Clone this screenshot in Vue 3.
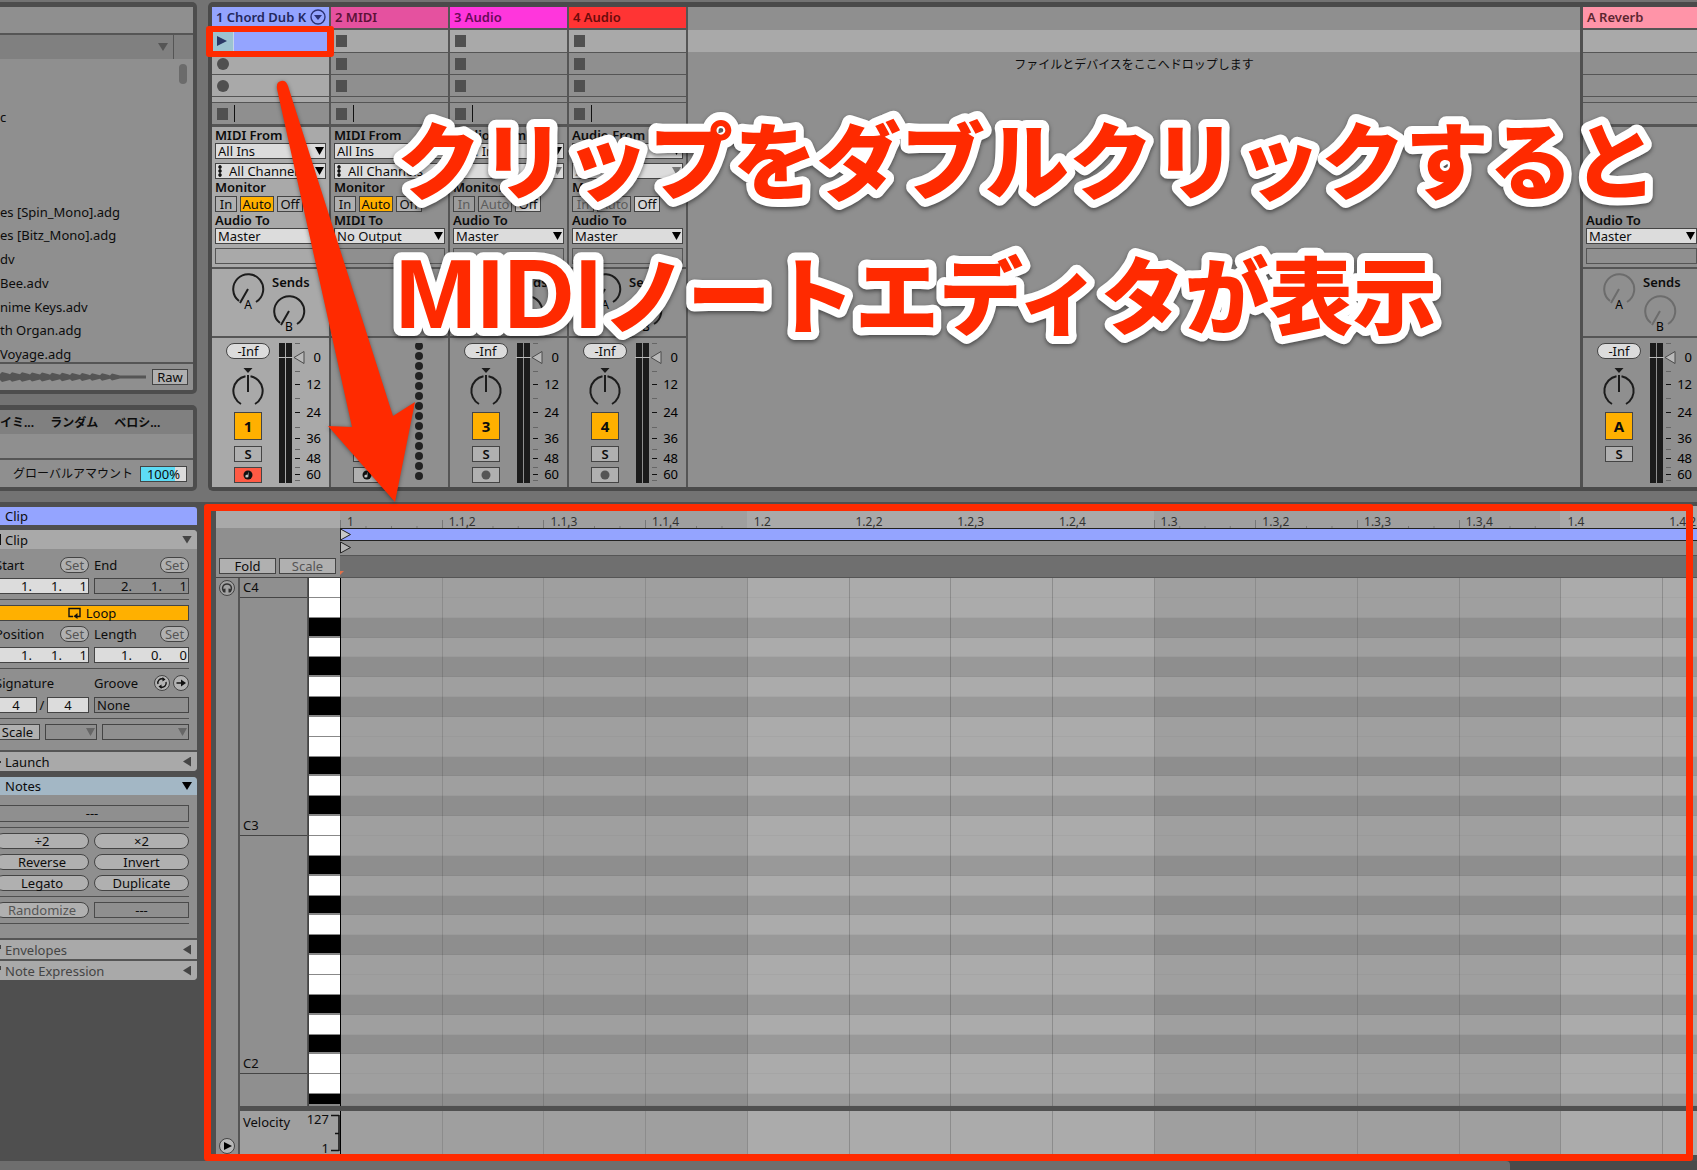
<template>
  <div class="live">
    <div class="upper">
      <div class="left-column">
        <section class="panel browser">
          <div class="browser-title"></div>
          <div class="browser-filter">
            <span class="tri-down tri-dim"></span>
          </div>
          <div class="browser-body">
            <ul class="file-list">
              <li v-for="(file, i) in files" :key="i">{{ file }}</li>
            </ul>
            <span class="scroll-thumb"></span>
          </div>
          <div class="preview">
            <svg class="wave" viewBox="0 0 148 16" aria-hidden="true">
              <path :d="wavePath" fill="#555" />
            </svg>
            <button class="btn raw">Raw</button>
          </div>
        </section>
        <section class="panel groove">
          <div class="groove-tabs">
            <span>イミ...</span>
            <span>ランダム</span>
            <span>ベロシ...</span>
          </div>
          <div class="groove-body"></div>
          <div class="groove-foot">
            <label for="amount">グローバルアマウント</label>
            <input id="amount" class="amount" value="100%" />
          </div>
        </section>
      </div>

      <section class="mixer">
        <div
          v-for="track in tracks"
          :key="track.name"
          class="track"
          :class="[track.color, { selected: track.selected, returns: track.isReturn }]"
        >
          <div class="track-name">
            <span>{{ track.name }}</span>
            <svg v-if="track.selected" width="16" height="16" viewBox="0 0 16 16">
              <circle cx="8" cy="8" r="7" fill="none" stroke="#2c3275" stroke-width="1.4" />
              <path d="M4 6h8l-4 5z" fill="#2c3275" />
            </svg>
          </div>
          <div v-for="n in 3" :key="n" class="slot" :class="{ 'slot-first': n === 1 }">
            <template v-if="track.selected && n === 1">
              <button class="clip-play" aria-label="Play clip">
                <svg width="10" height="12" viewBox="0 0 10 12">
                  <path d="M0 1l10 5-10 5z" fill="#2b3a66" />
                </svg>
              </button>
              <span class="clip-body"></span>
              <span class="clip-frame"></span>
            </template>
            <span v-else-if="track.selected" class="dot"></span>
            <span v-else-if="!track.isReturn" class="square"></span>
          </div>
          <div class="slot-gap"></div>
          <div class="stop-row">
            <template v-if="!track.isReturn">
              <span class="square"></span>
              <span class="caret"></span>
            </template>
          </div>

          <div class="io">
            <div v-if="!track.isReturn" class="io-input">
              <div class="io-label from">{{ track.from }}</div>
              <div class="select">
                <select :aria-label="track.name + ' input'">
                  <option>{{ track.input }}</option>
                </select>
              </div>
              <div class="select" :class="{ dimmed: track.dim, midi: !track.dim }">
                <select :aria-label="track.name + ' channel'">
                  <option>{{ track.channel }}</option>
                </select>
                <svg v-if="!track.dim" class="channel-icon" width="4" height="12" viewBox="0 0 4 12">
                  <path d="M2 0v12" stroke="#111" stroke-width="1" />
                  <circle v-for="y in [2, 6, 10]" :key="y" cx="2" :cy="y" r="1.8" fill="#111" />
                </svg>
              </div>
              <div class="io-label monitor">Monitor</div>
              <div class="monitor-row">
                <button class="btn in" :class="{ faded: track.dim }">In</button>
                <button class="btn auto" :class="track.dim ? 'faded' : 'on'">Auto</button>
                <button class="btn off" :class="{ lit: track.dim }">Off</button>
              </div>
            </div>
            <div class="io-label to">{{ track.to }}</div>
            <div class="select">
              <select :aria-label="track.name + ' output'">
                <option>{{ track.output }}</option>
              </select>
            </div>
            <div class="io-empty"></div>
          </div>

          <div class="sends">
            <template v-if="track.meter">
              <svg class="knob knob-a" width="34" height="42" viewBox="0 0 34 42">
                <path d="M8 29A15 15 0 1 1 25 30M17 17L9 31" />
                <text x="17" y="37">A</text>
              </svg>
              <div class="send-b">
                <div class="sends-label">Sends</div>
                <svg class="knob" width="34" height="42" viewBox="0 0 34 42">
                  <path d="M8 29A15 15 0 1 1 25 30M17 17L9 31" />
                  <text x="17" y="37">B</text>
                </svg>
              </div>
            </template>
          </div>

          <div class="strip">
            <div class="strip-controls">
              <template v-if="track.meter">
                <button class="volume">-Inf</button>
                <svg class="pan" width="34" height="39" viewBox="0 0 34 39">
                  <path d="M12.5 1h9l-4.5 5z" fill="#1c1c1c" />
                  <path
                    d="M10 37A15 15 0 0 1 14.5 9.2M19.5 9.2A15 15 0 0 1 24 37M17 8v17"
                    fill="none"
                    stroke="#1c1c1c"
                    stroke-width="2"
                  />
                </svg>
              </template>
              <button class="btn activator">{{ track.id }}</button>
              <button class="btn solo">S</button>
              <button
                v-if="!track.isReturn"
                class="btn arm"
                :class="{ armed: track.selected }"
                aria-label="Arm"
              >
                <svg width="10" height="10" viewBox="0 0 10 10">
                  <circle cx="5" cy="5" r="4.5" :fill="track.dim ? '#555' : '#111'" />
                  <path
                    v-if="!track.dim"
                    d="M5.5 1.5v4.5a1.6 1.3 0 1 1-1-1z"
                    fill="#fff"
                    opacity=".75"
                  />
                </svg>
              </button>
            </div>
            <svg v-if="track.meter" class="meter" width="44" height="141" viewBox="0 0 44 141">
              <path d="M1 0h6v140H1zM8 0h6v140H8z" fill="#1b1b1b" />
              <path d="M0 14.5h15" stroke="#bbb" />
              <path d="M16 14.5l10-6v12z" fill="#b9b9b9" stroke="#4a4a4a" />
              <path
                v-for="y in minorTicks"
                :key="y"
                :d="`M17 ${y}.5h5`"
                stroke="#666"
              />
              <template v-for="tick in majorTicks" :key="tick.label">
                <path v-if="tick.label !== '0'" :d="`M17 ${tick.y}.5h5`" stroke="#111" />
                <text x="43" :y="tick.y + 5">{{ tick.label }}</text>
              </template>
            </svg>
            <svg v-else class="meter" width="44" height="141" viewBox="0 0 44 141">
              <circle v-for="n in 14" :key="n" cx="22" :cy="n * 10 - 7" r="4" fill="#222" />
            </svg>
          </div>
        </div>
        <div class="drop-area">
          <div class="drop-band"></div>
          <p>ファイルとデバイスをここへドロップします</p>
        </div>
      </section>
    </div>

    <div class="lower">
      <aside class="clip-view">
        <div class="clip-title">Clip</div>
        <section class="box clip-box">
          <header class="box-head">
            <span class="clip-mark"></span>Clip<span class="tri-down"></span>
          </header>
          <div class="box-body">
            <div class="pair labels">
              <div>Start<button class="pill set">Set</button></div>
              <div>End<button class="pill set">Set</button></div>
            </div>
            <div class="pair">
              <div class="beat-field">
                <input v-for="(v, i) in start" :key="i" :value="v" aria-label="Start" />
              </div>
              <div class="beat-field inactive">
                <input v-for="(v, i) in end" :key="i" :value="v" aria-label="End" />
              </div>
            </div>
            <hr />
            <button class="btn loop">
              <svg width="13" height="12" viewBox="0 0 13 12">
                <path d="M5 9.5H1v-8h11v8H8" fill="none" stroke="#111" stroke-width="1.4" />
                <path d="M9.5 6v6L5.5 9.3z" fill="#111" />
              </svg>
              Loop
            </button>
            <div class="pair labels">
              <div>Position<button class="pill set">Set</button></div>
              <div>Length<button class="pill set">Set</button></div>
            </div>
            <div class="pair">
              <div class="beat-field">
                <input v-for="(v, i) in start" :key="i" :value="v" aria-label="Position" />
              </div>
              <div class="beat-field">
                <input v-for="(v, i) in length" :key="i" :value="v" aria-label="Length" />
              </div>
            </div>
            <hr />
            <div class="pair labels tall">
              <div>Signature</div>
              <div>
                Groove
                <button class="round first" aria-label="Hot-swap groove">
                  <svg width="16" height="16" viewBox="0 0 16 16">
                    <circle cx="8" cy="8" r="7.5" fill="#b3b3b3" stroke="#444" />
                    <path
                      d="M4 9a4 4 0 0 1 5-5M12 7a4 4 0 0 1-5 5"
                      fill="none"
                      stroke="#111"
                      stroke-width="1.4"
                    />
                    <path d="M8.5 2l3 2.5-3 2zM7.5 14l-3-2.5 3-2z" fill="#111" />
                  </svg>
                </button>
                <button class="round" aria-label="Commit groove">
                  <svg width="16" height="16" viewBox="0 0 16 16">
                    <circle cx="8" cy="8" r="7.5" fill="#b3b3b3" stroke="#444" />
                    <path d="M3.5 8h6" stroke="#111" stroke-width="1.6" />
                    <path d="M8 4.5l5 3.5-5 3.5z" fill="#111" />
                  </svg>
                </button>
              </div>
            </div>
            <div class="pair">
              <div class="signature">
                <input value="4" aria-label="Numerator" />
                <span>/</span>
                <input value="4" aria-label="Denominator" />
              </div>
              <div class="none-field">None</div>
            </div>
            <hr />
            <div class="scale-row">
              <button class="btn">Scale</button>
              <div class="select empty">
                <select aria-label="Root note"></select>
              </div>
              <div class="select empty">
                <select aria-label="Scale name"></select>
              </div>
            </div>
          </div>
          <header class="box-head launch">
            <span class="plus-mark"></span>Launch<span class="tri-left"></span>
          </header>
        </section>
        <section class="box notes-box">
          <header class="box-head notes-head">Notes<span class="tri-down tri-black"></span></header>
          <div class="box-body notes-body">
            <div class="readout">---</div>
            <hr />
            <div class="pair">
              <button class="pill">÷2</button>
              <button class="pill">×2</button>
            </div>
            <div class="pair">
              <button class="pill">Reverse</button>
              <button class="pill">Invert</button>
            </div>
            <div class="pair">
              <button class="pill">Legato</button>
              <button class="pill">Duplicate</button>
            </div>
            <hr />
            <div class="pair">
              <button class="pill muted">Randomize</button>
              <div class="readout short">---</div>
            </div>
            <hr />
          </div>
          <header class="box-head closed">
            <span class="fold-mark"></span>Envelopes<span class="tri-left"></span>
          </header>
          <header class="box-head closed">
            <span class="fold-mark"></span>Note Expression<span class="tri-left"></span>
          </header>
        </section>
      </aside>

      <section class="editor">
        <div class="editor-head">
          <div class="head-left">
            <div class="head-top"></div>
            <div class="head-buttons">
              <button class="btn">Fold</button>
              <button class="btn muted">Scale</button>
            </div>
          </div>
          <div class="head-right">
            <div class="ruler columns">
              <div v-for="(label, i) in beats" :key="label" :class="{ light: isLight(i) }">
                <span>{{ label }}</span>
              </div>
            </div>
            <div class="loop-bar">
              <svg width="12" height="13" viewBox="0 0 12 13">
                <path d="M.5 1l10 5.5-10 5.5z" fill="#c8c8c8" stroke="#222" />
              </svg>
            </div>
            <div class="start-bar">
              <svg width="12" height="13" viewBox="0 0 12 13">
                <path d="M.5 1l10 5.5-10 5.5z" fill="#b5b5b5" stroke="#222" />
              </svg>
            </div>
            <div class="marker-bar">
              <svg width="4" height="4" viewBox="0 0 4 4"><path d="M0 0h4L0 4z" fill="#e0704a" /></svg>
            </div>
          </div>
        </div>

        <div class="editor-body">
          <div class="side">
            <button class="round" aria-label="Preview">
              <svg width="16" height="16" viewBox="0 0 16 16">
                <circle cx="8" cy="8" r="7.5" fill="#a2a2a2" stroke="#444" />
                <path
                  d="M5 12C2 8 4 4 8 4s6 4 3 8"
                  fill="none"
                  stroke="#333"
                  stroke-width="1.4"
                />
                <path d="M4 9l2.500-.5v4H5zM12 9l-2.500-.5v4H11z" fill="#333" />
              </svg>
            </button>
            <button class="round" aria-label="Show lanes">
              <svg width="16" height="16" viewBox="0 0 16 16">
                <circle cx="8" cy="8" r="7.5" fill="#b8b8b8" stroke="#444" />
                <path d="M5 4l8 4-8 4z" fill="#000" />
              </svg>
            </button>
          </div>
          <div class="editor-main">
            <div class="roll">
              <div class="roll-rows octaves">
                <div v-for="(key, i) in keys" :key="i" :class="{ octave: key.label }">
                  {{ key.label }}
                </div>
              </div>
              <div class="roll-rows piano">
                <div v-for="(key, i) in keys" :key="i" :class="key.black ? 'black' : 'white'"></div>
              </div>
              <div class="lanes">
                <div class="columns">
                  <div v-for="(label, i) in beats" :key="label" :class="{ light: isLight(i) }"></div>
                </div>
                <div class="roll-rows shade">
                  <div v-for="(key, i) in keys" :key="i" :class="{ dark: key.black }"></div>
                </div>
              </div>
            </div>
            <div class="velocity">
              <div class="velocity-head">
                <span>Velocity</span>
                <div class="range"><span>127</span><span>1</span></div>
                <svg width="9" height="44" viewBox="0 0 9 44">
                  <path
                    d="M0 4.5h8M4 22.5h4M0 39.5h8M8 4v36"
                    fill="none"
                    stroke="#111"
                    stroke-width="1.5"
                  />
                </svg>
              </div>
              <div class="columns">
                <div v-for="(label, i) in beats" :key="label" :class="{ light: isLight(i) }"></div>
              </div>
            </div>
          </div>
        </div>
        <div class="editor-frame"></div>
      </section>
    </div>
    <div class="bottom-scroll"><span></span></div>

    <svg class="arrow" width="100" height="430" viewBox="0 0 100 430">
      <path d="M8 12Q7 5 12 4Q17 3 19 9L124 339L146 325L126 425L59 349L83 350Z" fill="#ff2a00" />
    </svg>
    <svg class="caption" width="1280" height="270" viewBox="0 0 1280 270">
      <text x="7" y="103">クリップをダブルクリックすると</text>
      <text x="5" y="238" class="latin">MIDI</text>
      <text x="213" y="238">ノートエディタが表示</text>
    </svg>
  </div>
</template>

<script setup>
import { ref } from 'vue'

const files = ref([
  'c',
  '',
  '',
  '',
  'es [Spin_Mono].adg',
  'es [Bitz_Mono].adg',
  'dv',
  'Bee.adv',
  'nime Keys.adv',
  'th Organ.adg',
  'Voyage.adg',
])

const tracks = ref([
  {
    id: '1',
    name: '1 Chord Dub K',
    color: 'blue',
    selected: true,
    meter: true,
    from: 'MIDI From',
    input: 'All Ins',
    channel: 'All Channels',
    to: 'Audio To',
    output: 'Master',
  },
  {
    id: '2',
    name: '2 MIDI',
    color: 'pink',
    meter: false,
    from: 'MIDI From',
    input: 'All Ins',
    channel: 'All Channels',
    to: 'MIDI To',
    output: 'No Output',
  },
  {
    id: '3',
    name: '3 Audio',
    color: 'magenta',
    meter: true,
    dim: true,
    from: 'Audio From',
    input: 'Ext. In',
    channel: '1',
    to: 'Audio To',
    output: 'Master',
  },
  {
    id: '4',
    name: '4 Audio',
    color: 'red',
    meter: true,
    dim: true,
    from: 'Audio From',
    input: 'Ext. In',
    channel: '2',
    to: 'Audio To',
    output: 'Master',
  },
  {
    id: 'A',
    name: 'A Reverb',
    color: 'rose',
    meter: true,
    dim: true,
    isReturn: true,
    to: 'Audio To',
    output: 'Master',
  },
])

const minorTicks = [0, 28, 55, 84, 106, 124, 137]
const majorTicks = [
  { y: 14, label: '0' },
  { y: 41, label: '12' },
  { y: 69, label: '24' },
  { y: 95, label: '36' },
  { y: 115, label: '48' },
  { y: 131, label: '60' },
]

const start = ref(['1.', '1.', '1'])
const end = ref(['2.', '1.', '1'])
const length = ref(['1.', '0.', '0'])

const beats = [
  '1', '1.1,2', '1.1,3', '1.1,4',
  '1.2', '1.2,2', '1.2,3', '1.2,4',
  '1.3', '1.3,2', '1.3,3', '1.3,4',
  '1.4', '1.4,2',
]

// every second beat is drawn lighter
function isLight(index) {
  return Math.floor(index / 4) % 2 === 1
}

// from C4 downwards, the last row is cut by the velocity lane
const blackNotes = [2, 4, 6, 9, 11]
const keys = Array.from({ length: 27 }, (_, i) => ({
  black: blackNotes.includes(i % 12),
  label: i % 12 === 0 ? 'C' + (4 - i / 12) : '',
}))

function buildWave() {
  const top = []
  const bottom = []
  for (let x = 0; x <= 146; x += 2) {
    const size = x > 118 ? 1.5 : 3 + ((x * 7) % 5) * 0.5 - x / 80
    top.push(`${x} ${8 - size}`)
    bottom.unshift(`${x} ${8 + size}`)
  }
  return 'M' + top.concat(bottom).join('L') + 'Z'
}
const wavePath = buildWave()
</script>

<style>
body {
  background: #4f4f4f;
}
</style>

<style scoped>
* {
  box-sizing: border-box;
}

.live {
  position: relative;
  display: flex;
  flex-direction: column;
  height: 100vh;
  min-height: 1000px;
  padding-top: 2px;
  overflow: hidden;
  background: #737373;
  color: #0c0c0c;
  font-family: 'Noto Sans', 'Noto Sans CJK JP', sans-serif;
  font-size: 13px;
  line-height: 16px;
}

button,
input,
select {
  margin: 0;
  padding: 0;
  border-radius: 0;
  color: inherit;
  font: inherit;
}

p,
ul {
  margin: 0;
  padding: 0;
  list-style: none;
}

svg {
  display: block;
  flex: none;
}

.btn {
  display: flex;
  align-items: center;
  justify-content: center;
  height: 16px;
  border: 1px solid #444;
  background: #b0b0b0;
  line-height: 14px;
}

.muted {
  color: #555;
}

.tri-down,
.tri-left {
  width: 10px;
  height: 8px;
  background: #444;
  clip-path: polygon(0 0, 100% 0, 50% 100%);
}
.tri-left {
  width: 8px;
  height: 10px;
  clip-path: polygon(100% 0, 100% 100%, 0 50%);
}
.tri-black {
  background: #000;
}

/* upper half */
.upper {
  display: flex;
  gap: 11px;
  height: 489px;
  flex: none;
}
.left-column {
  display: flex;
  flex-direction: column;
  gap: 11px;
  width: 197px;
  flex: none;
}
.panel {
  display: flex;
  flex-direction: column;
  border: solid #4d4d4d;
  border-width: 5px 4px 4px 0;
  border-radius: 0 5px 5px 0;
  background: #8f8f8f;
}
.browser {
  flex: 1;
}
.browser-title {
  height: 28px;
  border-bottom: 2px solid #555;
}
.browser-filter {
  display: flex;
  justify-content: flex-end;
  align-items: center;
  height: 24px;
  padding-right: 25px;
  background: linear-gradient(to left, transparent 19px, #555 19px 20px, transparent 20px) #808080;
}
.browser-filter .tri-down {
  background: #555;
}
.browser-body {
  display: flex;
  justify-content: space-between;
  flex: 1;
  padding: 5px 6px 1px 0;
}
.file-list {
  display: flex;
  flex-direction: column;
  justify-content: space-between;
  padding-top: 46px;
}
.file-list li {
  height: 14px;
  line-height: 14px;
  white-space: nowrap;
}
.scroll-thumb {
  width: 8px;
  height: 20px;
  border-radius: 4px;
  background: #6b6b6b;
}
.preview {
  display: flex;
  align-items: center;
  justify-content: space-between;
  height: 28px;
  padding-right: 5px;
  border-top: 2px solid #555;
}
.wave {
  width: 148px;
  height: 16px;
}
.raw {
  width: 36px;
}

.groove {
  height: 86px;
  flex: none;
}
.groove-tabs {
  display: flex;
  gap: 16px;
  height: 24px;
  background: #808080;
  font-size: 12px;
  font-weight: 700;
  line-height: 25px;
}
.groove-body {
  flex: 1;
}
.groove-foot {
  display: flex;
  align-items: center;
  justify-content: flex-end;
  gap: 7px;
  height: 29px;
  padding-right: 6px;
  border-top: 2px solid #555;
  font-size: 12px;
}
.amount {
  width: 47px;
  height: 16px;
  border: 1px solid #444;
  background: linear-gradient(to right, #5ddcf5 75%, #dcdcdc 75%);
  font-size: 13px;
  text-align: center;
}

/* mixer */
.mixer {
  display: flex;
  flex: 1;
  min-width: 0;
  border: solid #4a4a4a;
  border-width: 5px 0 4px 4px;
  border-radius: 5px 0 0 5px;
  background: #8f8f8f;
}
.track {
  display: flex;
  flex-direction: column;
  flex: none;
  width: 119px;
  border-right: 2px solid #555;
}
.returns {
  order: 2;
  width: 117px;
  border-right: 0;
  border-left: 3px solid #505050;
}
.selected {
  background: #a9a9a9;
}
.track-name {
  display: flex;
  align-items: center;
  justify-content: space-between;
  height: 23px;
  padding: 0 3px 1px 4px;
  border-bottom: 2px solid #555;
  font-weight: 600;
  white-space: nowrap;
}
.blue .track-name {
  background: #94a4ff;
  color: #23285c;
}
.pink .track-name {
  background: #e5519f;
  color: #5c1138;
}
.magenta .track-name {
  background: #ff36dc;
  color: #6a0a58;
}
.red .track-name {
  background: #ff3434;
  color: #6b0b0b;
}
.rose .track-name {
  background: #ff94a8;
  color: #5b2630;
}
.slot {
  position: relative;
  display: flex;
  align-items: center;
  height: 22px;
  padding-left: 5px;
  border-bottom: 1px solid #555;
}
.slot-first {
  height: 23px;
  background: #a9a9a9;
}
.blue .slot-first {
  padding: 1px;
}
.square {
  width: 11px;
  height: 12px;
  background: #505050;
}
.dot {
  width: 12px;
  height: 12px;
  border-radius: 50%;
  background: #505050;
}
.clip-play {
  display: flex;
  align-items: center;
  width: 21px;
  height: 20px;
  padding-left: 4px;
  border: 0;
  border-right: 1px solid #c8d4e8;
  background: #9cc3d0;
}
.clip-body {
  flex: 1;
  height: 20px;
  background: #94a4ff;
}
.clip-frame {
  position: absolute;
  inset: -4px -5px -5px -6px;
  z-index: 2;
  border: 6px solid #ff2a00;
  border-width: 6px 7px;
  border-radius: 3px;
}
.slot-gap {
  height: 6px;
  border-bottom: 1px solid #555;
}
.stop-row {
  display: flex;
  align-items: center;
  gap: 6px;
  height: 24px;
  padding-left: 5px;
  border-bottom: 3px solid #555;
  background: #8f8f8f;
}
.caret {
  width: 1px;
  height: 17px;
  background: #111;
}

.io {
  display: flex;
  flex-direction: column;
  justify-content: flex-end;
  height: 142px;
  padding: 0 3px 3px;
  border-bottom: 2px solid #555;
}
.returns .io {
  padding-right: 0;
}
.io-label {
  height: 16px;
  font-weight: 600;
}
.from {
  height: 15px;
  line-height: 15px;
}
.monitor {
  height: 17px;
}
.select {
  position: relative;
  height: 16px;
}
.select + .select {
  margin-top: 4px;
}
.select select {
  display: block;
  width: 100%;
  height: 16px;
  padding-left: 2px;
  border: 1px solid #444;
  background: #dcdcdc;
  line-height: 14px;
  appearance: none;
}
.select::after {
  content: '';
  position: absolute;
  top: 4px;
  right: 2px;
  width: 9px;
  height: 8px;
  background: #000;
  clip-path: polygon(0 0, 100% 0, 50% 100%);
}
.midi select {
  padding-left: 13px;
}
.channel-icon {
  position: absolute;
  top: 2px;
  left: 3px;
}
.dimmed select {
  color: #888;
}
.dimmed::after {
  background: #777;
}
.monitor-row {
  display: flex;
  gap: 3px;
}
.in {
  width: 22px;
}
.auto {
  width: 34px;
}
.off {
  width: 26px;
}
.on {
  background: #ffb000;
}
.faded {
  background: #9c9c9c;
  color: #5c5c5c;
}
.lit {
  background: #d4d4d4;
}
.io-empty {
  height: 16px;
  margin-top: 4px;
  border: 1px solid #555;
}

.sends {
  display: flex;
  gap: 7px;
  height: 69px;
  padding-left: 19px;
  border-bottom: 2px solid #555;
}
.knob-a {
  margin-top: 3px;
}
.knob path {
  fill: none;
  stroke: #1c1c1c;
  stroke-width: 2;
}
.returns .knob path {
  stroke: #6c6c6c;
}
.knob text {
  font-size: 12px;
  text-anchor: middle;
}
.sends-label {
  height: 25px;
  font-weight: 600;
  line-height: 26px;
}

.strip {
  display: flex;
  flex: 1;
  padding-top: 5px;
}
.strip-controls {
  display: flex;
  flex-direction: column;
  align-items: center;
  justify-content: flex-end;
  width: 66px;
  height: 140px;
  padding-left: 6px;
}
.returns .strip-controls {
  justify-content: flex-start;
}
.volume {
  width: 44px;
  height: 16px;
  border: 1px solid #444;
  border-radius: 8px;
  background: #dcdcdc;
  line-height: 14px;
}
.pan {
  margin: 8px 0 6px;
}
.activator {
  width: 28px;
  height: 28px;
  background: #ffb000;
  font-size: 15px;
  font-weight: 700;
}
.solo,
.arm {
  width: 28px;
  margin-top: 5px;
  font-weight: 600;
}
.solo {
  margin-top: 6px;
}
.armed {
  background: #ff5a44;
}
.meter text {
  font-size: 13px;
  text-anchor: end;
}

.drop-area {
  order: 1;
  flex: 1;
  padding-top: 23px;
  text-align: center;
}
.drop-band {
  height: 22px;
  background: #a9a9a9;
}
.drop-area p {
  padding-top: 5px;
  font-size: 12px;
}

/* clip view */
.lower {
  display: flex;
  flex: 1;
  gap: 19px;
  min-height: 0;
  margin-top: 11px;
  border-top: 4px solid #4f4f4f;
  background: #4f4f4f;
}
.clip-view {
  display: flex;
  flex-direction: column;
  gap: 5px;
  width: 207px;
  margin-left: -10px;
  padding-top: 1px;
  flex: none;
}
.clip-title {
  height: 18px;
  padding-left: 15px;
  border-radius: 0 3px 0 0;
  background: #94a4ff;
  line-height: 18px;
}
.box {
  background: #8f8f8f;
  border-radius: 0 4px 4px 0;
  overflow: hidden;
}
.box-head {
  display: flex;
  align-items: center;
  height: 19px;
  padding: 0 5px 0 15px;
  background: #a9a9a9;
}
.box-head .tri-down,
.box-head .tri-left {
  margin-left: auto;
}
.box-head .tri-left {
  margin-right: 1px;
}
.clip-mark {
  width: 1px;
  height: 11px;
  margin: 0 4px 0 -5px;
  background: #111;
}
.plus-mark {
  width: 2px;
  height: 2px;
  margin: 0 4px 0 -6px;
  background: #333;
}
.fold-mark {
  width: 1px;
  height: 4px;
  margin: -6px 4px 0 -5px;
  background: #444;
}
.launch {
  height: 21px;
  border-top: 2px solid #555;
}
.box-body {
  display: flex;
  flex-direction: column;
  gap: 5px;
  padding: 8px 8px 10px 5px;
}
.box-body hr {
  width: 100%;
  height: 1px;
  margin: 0;
  border: 0;
  background: #4f4f4f;
}
.pair {
  display: grid;
  grid-template-columns: 94px 95px;
  gap: 5px;
}
.labels > div {
  display: flex;
  align-items: center;
  height: 16px;
}
.tall > div {
  height: 18px;
}
.pill {
  height: 16px;
  border: 1px solid #444;
  border-radius: 8px;
  background: #b0b0b0;
  line-height: 13px;
}
.set {
  width: 29px;
  margin-left: auto;
  color: #555;
}
.beat-field {
  display: flex;
  justify-content: flex-end;
  height: 16px;
  padding-right: 1px;
  border: 1px solid #444;
  background: #dcdcdc;
}
.beat-field input,
.signature input {
  width: 30px;
  height: 14px;
  border: 0;
  background: transparent;
  text-align: right;
}
.beat-field input:last-child {
  width: 25px;
}
.inactive {
  background: #8f8f8f;
}
.loop {
  gap: 5px;
  background: #ffb000;
}
.round {
  width: 16px;
  height: 16px;
  border: 0;
  background: none;
}
.round.first {
  margin: 0 3px 0 auto;
}
.signature {
  display: flex;
  justify-content: space-between;
}
.signature input {
  width: 42px;
  height: 16px;
  border: 1px solid #444;
  background: #dcdcdc;
  text-align: center;
}
.none-field {
  height: 16px;
  padding-left: 2px;
  border: 1px solid #444;
  line-height: 14px;
}
.scale-row {
  display: grid;
  grid-template-columns: 45px 52px 87px;
  gap: 5px;
}
.scale-row .select {
  margin: 0;
}
.empty select {
  background: #8f8f8f;
}
.empty::after {
  background: #666;
}
.notes-box {
  margin-top: 1px;
}
.notes-head {
  height: 18px;
  background: #a3b7c5;
}
.notes-body {
  padding: 10px 8px 14px 5px;
}
.readout {
  height: 17px;
  border: 1px solid #4a4a4a;
  line-height: 15px;
  text-align: center;
}
.short {
  height: 16px;
}
.closed {
  height: 21px;
  border-top: 2px solid #555;
  color: #444;
}

/* note editor */
.editor {
  position: relative;
  display: flex;
  flex-direction: column;
  flex: 1;
  min-width: 0;
  padding-bottom: 6px;
}
.editor-frame {
  position: absolute;
  inset: -2px 4px 0 -12px;
  border: 7px solid #ff2a00;
  border-radius: 3px;
  pointer-events: none;
}
.editor-head {
  display: flex;
  height: 72px;
  flex: none;
}
.head-left {
  width: 124px;
  border-bottom: 1px solid #444;
  background: #8f8f8f;
}
.head-top {
  height: 22px;
  background: #a9a9a9;
}
.head-buttons {
  display: grid;
  grid-template-columns: 1fr 1fr;
  gap: 3px;
  padding: 30px 4px 0 3px;
}
.head-right {
  flex: 1;
}
.columns {
  display: grid;
  grid-template-columns: repeat(13, 35fr) 12fr;
  min-width: 0;
}
.columns > div {
  min-width: 0;
  border-left: 1px solid #8c8c8c;
  background: #9f9f9f;
}
.columns > div:first-child {
  border-color: #000;
}
.columns > .light {
  background: #ababab;
}
.ruler {
  height: 22px;
}
.ruler > div {
  height: 22px;
  padding: 9px 0 0 7px;
  border: 0;
  background: linear-gradient(#777, #777) left bottom / 1px 8px no-repeat,
    linear-gradient(to right, #777 1px, transparent 1px) left bottom / 25% 2px repeat-x, #9f9f9f;
  color: #333;
  font-size: 12px;
  line-height: 14px;
  white-space: nowrap;
}
.ruler > .light {
  background-color: #a9a9a9;
}
.loop-bar {
  height: 13px;
  border: solid #222;
  border-width: 1px 0;
  background: #94a4ff;
}
.loop-bar svg {
  margin-top: -1px;
}
.start-bar {
  height: 15px;
  border-bottom: 1px solid #555;
  background: #8f8f8f;
}
.marker-bar {
  display: flex;
  align-items: flex-end;
  height: 22px;
  padding-bottom: 2px;
  border-bottom: 1px solid #555;
  background: #6f6f6f;
}
.editor-body {
  display: flex;
  flex: 1;
  min-height: 0;
}
.side {
  display: flex;
  flex-direction: column;
  justify-content: space-between;
  align-items: center;
  width: 24px;
  padding: 2px 0 1px;
  border-right: 2px solid #555;
  background: #8f8f8f;
}
.editor-main {
  display: flex;
  flex-direction: column;
  flex: 1;
  min-width: 0;
}
.roll {
  display: flex;
  flex: 1;
  min-height: 0;
}
.roll-rows {
  display: grid;
  grid-template-rows: repeat(26, 5fr) 3fr;
}
.roll-rows > div {
  min-height: 0;
}
.octaves {
  width: 68px;
  border-right: 1px solid #555;
  background: #8f8f8f;
}
.octaves > div {
  padding-left: 3px;
  line-height: 19px;
}
.octave {
  border-bottom: 1px solid #444;
}
.piano {
  width: 32px;
  background: #fff;
  border-left: 1px solid #444;
}
.white {
  border-bottom: 1px solid #888;
}
.black {
  border-bottom: 2px solid #888;
  background: #000;
}
.lanes {
  display: grid;
  flex: 1;
  min-width: 0;
}
.lanes > * {
  grid-area: 1 / 1;
}
.shade > div {
  border-bottom: 1px solid rgba(0, 0, 0, 0.03);
}
.dark {
  background: rgba(0, 0, 0, 0.1);
}
.velocity {
  display: flex;
  height: 49px;
  flex: none;
  border-top: 5px solid #505050;
}
.velocity-head {
  display: flex;
  width: 100px;
  padding-left: 3px;
  background: #9f9f9f;
}
.velocity-head > span {
  flex: 1;
  padding-top: 3px;
}
.range {
  display: flex;
  flex-direction: column;
  justify-content: space-between;
  align-items: flex-end;
  padding-right: 2px;
}
.range span:last-child {
  line-height: 14px;
}
.velocity .columns {
  flex: 1;
}

.bottom-scroll {
  height: 9px;
  flex: none;
  background: #4a4a4a;
}
.bottom-scroll span {
  display: block;
  width: 89%;
  height: 9px;
  border-radius: 0 4px 0 0;
  background: #6e6e6e;
}

/* annotations on top of the window */
.arrow {
  position: absolute;
  top: 77px;
  left: 269px;
  z-index: 3;
  overflow: visible;
  filter: drop-shadow(0 1px 2px rgba(0, 0, 0, 0.4));
}
.caption {
  position: absolute;
  top: 90px;
  left: 390px;
  z-index: 4;
  overflow: visible;
  fill: #ff2a00;
  stroke: #fff;
  stroke-width: 16px;
  stroke-linejoin: round;
  paint-order: stroke fill;
  font-family: 'Noto Sans CJK JP', sans-serif;
  font-size: 84px;
  font-weight: 900;
  filter: drop-shadow(0 2px 2px rgba(0, 0, 0, 0.5));
  pointer-events: none;
}
.caption .latin {
  font-family: 'Liberation Sans', sans-serif;
  font-size: 98px;
  font-weight: 700;
}
</style>
